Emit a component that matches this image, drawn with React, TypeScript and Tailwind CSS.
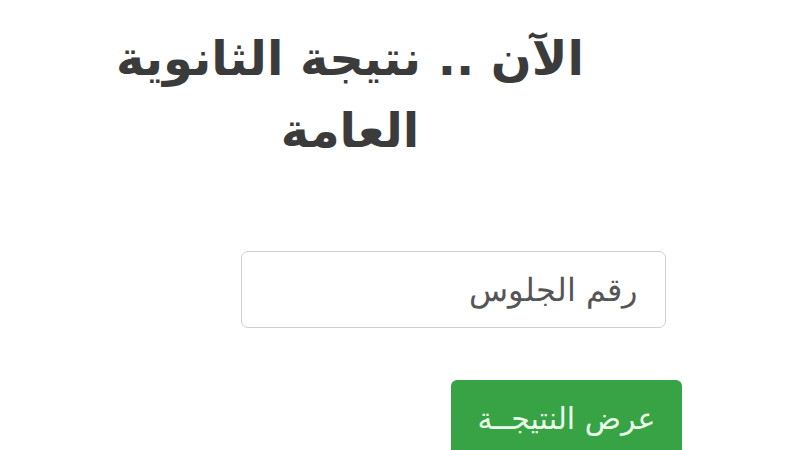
import React from "react";

export default function App() {
  return (
    <div className="w-[800px] h-[450px] bg-white overflow-hidden flex flex-col" dir="ltr">
      <div
        dir="rtl"
        className="shrink-0 w-[700px] pt-[22px] text-center text-[#3b3b3b] font-bold text-[48px] leading-[72px]"
        style={{ fontFamily: '"DejaVu Sans", "Noto Sans", sans-serif' }}
      >
        <div>الآن .. نتيجة الثانوية</div>
        <div>العامة</div>
      </div>
      <div className="shrink-0 mt-[85px] ml-[241px] w-[425px] h-[77px] rounded-[7px] border border-[#cfcfcf] flex items-center justify-end pr-[28px]">
        <span
          dir="rtl"
          className="text-[32px] text-[#555555]"
          style={{ fontFamily: '"DejaVu Sans", sans-serif', fontWeight: 300 }}
        >
          رقم الجلوس
        </span>
      </div>
      <div className="shrink-0 mt-[52px] ml-[451px] w-[231px] h-[80px] rounded-[6px] bg-[#37a345] flex items-start justify-center pt-[16px]">
        <span
          dir="rtl"
          className="text-[30px] text-[#eaffea]"
          style={{ fontFamily: '"DejaVu Sans", sans-serif' }}
        >
          عرض النتيجــة
        </span>
      </div>
    </div>
  );
}
